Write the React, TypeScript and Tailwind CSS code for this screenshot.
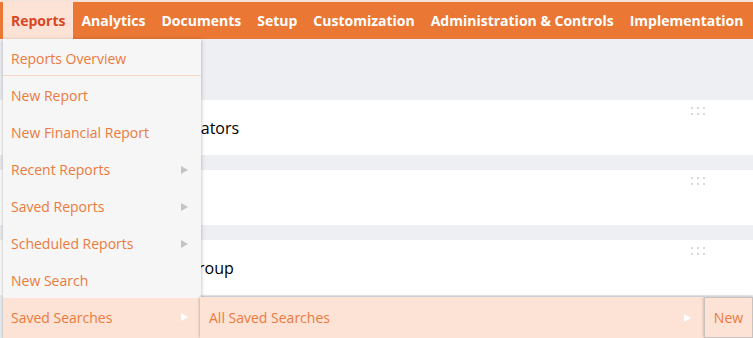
import React from 'react';

const navItems = [
  'Reports',
  'Analytics',
  'Documents',
  'Setup',
  'Customization',
  'Administration & Controls',
  'Implementation',
];

const menuItems = [
  { label: 'New Report' },
  { label: 'New Financial Report' },
  { label: 'Recent Reports', arrow: true },
  { label: 'Saved Reports', arrow: true },
  { label: 'Scheduled Reports', arrow: true },
  { label: 'New Search' },
];

// indent keeps the visible tail of each title where the reference has it
const cards = [
  { title: 'Key Performance Indicators', indent: 'pl-[33px]' },
  { title: 'Reminders', indent: 'pl-[33px]' },
  { title: 'Sales Performance by Group', indent: 'pl-[21px]' },
];

function Arrow({ white }: { white?: boolean }) {
  return (
    <svg width="7" height="8" viewBox="0 0 7 8" className="shrink-0">
      <path d="M0 0 L7 4 L0 8 Z" fill={white ? '#ffffff' : '#c4c4c4'} />
    </svg>
  );
}

function DragHandle() {
  return (
    <div className="grid grid-cols-3 gap-x-[4px] gap-y-[4px]">
      {[...Array(6)].map((_, i) => (
        <span key={i} className="h-[2px] w-[2px] bg-[#d9d9d9]" />
      ))}
    </div>
  );
}

export default function App() {
  return (
    <div className="relative h-[338px] w-[753px] overflow-hidden bg-[#eeeff3] font-['Open_Sans',sans-serif]">
      {/* Top nav */}
      <nav className="flex h-[39px] items-stretch border-t-2 border-[#f4e2d8] bg-[#ea7734] pl-[3px]">
        {navItems.map((item, i) => (
          <div
            key={item}
            className={`flex items-center px-2 text-[14px] font-bold ${
              i === 0 ? 'bg-[#fce3d6] text-[#d9461f]' : 'text-white'
            }`}
          >
            {item}
          </div>
        ))}
      </nav>

      {/* Dashboard cards */}
      <div className="flex flex-col gap-[15px] pt-[61px]">
        {cards.map((card) => (
          <div key={card.title} className={`relative flex h-[55px] items-center bg-white ${card.indent}`}>
            <span className="text-[16px] text-black">{card.title}</span>
            <div className="absolute right-[48px] top-[7px]">
              <DragHandle />
            </div>
          </div>
        ))}
      </div>

      {/* Reports dropdown */}
      <div className="absolute left-[3px] top-[39px] w-[198px] bg-[#f6f6f6] shadow-[0_1px_4px_rgba(0,0,0,0.3)]">
        <div className="flex h-[37px] items-center border-b border-[#f7d6c6] px-2 pt-[2px] text-[14px] text-[#ec7a3c]">
          Reports Overview
        </div>
        {menuItems.map((item) => (
          <div
            key={item.label}
            className="flex h-[37px] items-center justify-between pl-2 pr-[13px] pt-[2px] text-[14px] text-[#ec7a3c]"
          >
            <span>{item.label}</span>
            {item.arrow && <Arrow />}
          </div>
        ))}
        <div className="flex h-[40px] items-center justify-between bg-[#fce3d6] pl-2 pr-[13px] pb-[2px] text-[14px] text-[#ec7a3c]">
          <span>Saved Searches</span>
          <Arrow white />
        </div>
      </div>

      {/* Saved searches submenu */}
      <div className="absolute left-[200px] top-[297px] flex h-[41px]">
        <div className="flex w-[504px] items-center justify-between bg-[#fce3d6] pl-[9px] pr-[13px] text-[14px] text-[#ec7a3c] shadow-[0_0_3px_rgba(0,0,0,0.35)]">
          <span>All Saved Searches</span>
          <Arrow white />
        </div>
        <div className="flex w-[49px] items-center justify-center border border-[#c9c2bf] bg-[#fce3d6] text-[14px] text-[#ec7a3c] shadow-[0_0_3px_rgba(0,0,0,0.3)]">
          New
        </div>
      </div>
    </div>
  );
}
